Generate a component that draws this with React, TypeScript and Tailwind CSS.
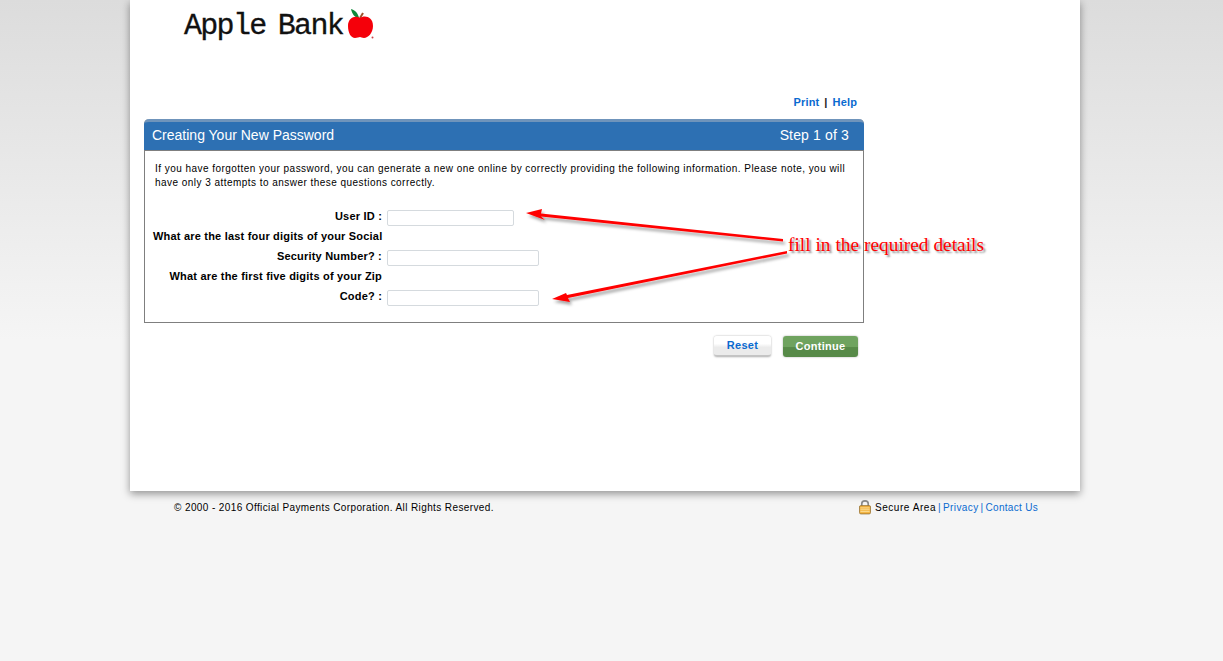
const arial = "font-['Liberation_Sans',Arial,sans-serif]";

const FormRow = ({ label, inputWidth }: { label: string; inputWidth?: string }) => (
  <div className="flex h-5 items-center">
    <div className="w-[230px] whitespace-nowrap pr-px text-right text-[11px] font-bold tracking-[0.2px] text-black">
      {label}
    </div>
    {inputWidth && (
      <input
        type="text"
        className={`ml-[4px] h-4 self-end ${inputWidth} rounded-[2px] border border-[#d5dade] bg-white`}
      />
    )}
  </div>
);

const AppleLogo = () => (
  <svg width="27" height="30" viewBox="0 0 27 30" className="mt-px">
    <path d="M4 0 C8 1 11 4 12 9 C8 9 5 5 4 0 Z" fill="#0c8a3a" />
    <path d="M13 9 L16 4" stroke="#a0522d" strokeWidth="2" />
    <path
      d="M13 9 C17 6 26 7 26 17 C26 24 21 29 17 29 C15 29 14 28 13 28 C12 28 10 29 8 29 C4 29 1 24 1 17 C1 8 9 6 13 9 Z"
      fill="#f5000a"
    />
    <circle cx="25.5" cy="28.5" r="1" fill="#d0404a" />
  </svg>
);

const Annotation = () => (
  <div className="absolute left-[500px] top-[195px] h-[120px] w-[500px]">
    <svg width="300" height="120" viewBox="0 0 300 120" className="absolute left-0 top-0">
      <defs>
        <filter id="arrowShadow" x="-10%" y="-20%" width="120%" height="150%">
          <feDropShadow dx="2" dy="3" stdDeviation="1.5" floodColor="#000" floodOpacity="0.35" />
        </filter>
      </defs>
      <g fill="#ff0000" filter="url(#arrowShadow)">
        <path d="M26 18 L42 14 L41 18.5 L283 44 L283 46.5 L41 21.5 L45 25 Z" />
        <path d="M52 104 L66 98 L67 100 L287 56 L287 58.5 L68 103 L70 107 Z" />
      </g>
    </svg>
    <div className="absolute left-[288px] top-[39px] whitespace-nowrap font-['Liberation_Serif',serif] text-[19.4px] leading-[22px] text-[#ff0000] [text-shadow:2px_2px_2px_rgba(0,0,0,0.45)]">
      fill in the required details
    </div>
  </div>
);

const LockIcon = () => (
  <svg width="12" height="16" viewBox="0 0 13 16" className="-mt-px">
    <path d="M3 7 V4.5 C3 0.3 10 0.3 10 4.5 V7" fill="none" stroke="#8a8a8a" strokeWidth="1.8" />
    <rect x="0.5" y="6.5" width="12" height="9" rx="1.5" fill="#f3b13c" stroke="#8f6b30" strokeWidth="0.8" />
    <path d="M1.5 9 H11.5 M1.5 11 H11.5 M1.5 13 H11.5" stroke="#fde6a8" strokeWidth="0.9" />
  </svg>
);

export default function App() {
  return (
    <div className={`${arial} relative h-[661px] w-full overflow-hidden bg-[linear-gradient(180deg,#dcdcdc_0px,#f5f5f5_340px)]`}>
      <main className="relative ml-[130px] h-[491px] w-[950px] bg-white shadow-[0_3px_8px_rgba(0,0,0,0.4)]">
        <div className="flex h-[94px] items-start pl-[54px] pt-[8px]">
          <div className="flex items-start">
            <span className="mt-[2px] w-[163px] whitespace-nowrap font-['Liberation_Mono',monospace] text-[30px] leading-[32px] tracking-[-1.7px] text-[#111] [word-spacing:-4px] [-webkit-text-stroke:0.3px_#111]">
              Apple Bank
            </span>
            <AppleLogo />
          </div>
        </div>

        <div className="flex h-[25px] w-[727px] items-start justify-end gap-[5px] pt-[1px] text-[11px] font-bold leading-[14px] tracking-[0.15px] text-[#0a6ad0]">
          <a>Print</a>
          <span className="text-[#222]">|</span>
          <a>Help</a>
        </div>

        <section className="ml-[14px] h-[204px] w-[720px] rounded-t-[5px] border border-t-0 border-[#7f7f7f]">
          <header className="-mx-px flex h-[32px] items-center justify-between rounded-t-[5px] border-t-[3px] border-b border-t-[#6f94bb] border-b-[#7f7f7f] bg-[#2d70b3] pb-[2px] pl-[8px] pr-[15px] text-[14px] text-white">
            <span>Creating Your New Password</span>
            <span className="tracking-[0.15px]">Step 1 of 3</span>
          </header>
          <p className="ml-[10px] mt-[11px] w-[700px] text-[10px] leading-[14px] tracking-[0.46px] text-black">
            If you have forgotten your password, you can generate a new one online by correctly providing the following information. Please note, you will have only 3 attempts to answer these questions correctly.
          </p>
          <div className="mt-[16px] flex flex-col pl-[8px]">
            <FormRow label="User ID :" inputWidth="w-[127px]" />
            <FormRow label="What are the last four digits of your Social" />
            <FormRow label="Security Number? :" inputWidth="w-[152px]" />
            <FormRow label="What are the first five digits of your Zip" />
            <FormRow label="Code? :" inputWidth="w-[152px]" />
          </div>
        </section>

        <div className="ml-[14px] mt-[13px] flex w-[714px] justify-end gap-[12px]">
          <button className="h-[21px] w-[57px] rounded-[3px] border-b-2 border-[#c4c4c4] bg-[linear-gradient(180deg,#ffffff_40%,#ebebeb_60%)] text-[11px] font-bold tracking-[0.3px] text-[#0a6ad0] shadow-[0_0_2px_rgba(0,0,0,0.35)]">
            Reset
          </button>
          <button className="h-[21px] w-[75px] rounded-[3px] bg-[linear-gradient(180deg,#6fa35f_50%,#578a48_55%)] text-[11px] font-bold tracking-[0.3px] text-white shadow-[0_0_2px_rgba(0,0,0,0.35)]">
            Continue
          </button>
        </div>
      </main>

      <footer className="ml-[174px] mt-[8px] flex h-[16px] w-[864px] items-center justify-between text-[10px] tracking-[0.39px] text-black">
        <span>© 2000 - 2016 Official Payments Corporation. All Rights Reserved.</span>
        <div className="flex items-center gap-[2px]">
          <LockIcon />
          <span className="ml-[2px] tracking-[0.55px]">Secure Area</span>
          <span className="text-[#0a6ad0]">|</span>
          <a className="text-[#0a6ad0]">Privacy</a>
          <span className="text-[#0a6ad0]">|</span>
          <a className="text-[#0a6ad0] tracking-[0.3px]">Contact Us</a>
        </div>
      </footer>

      <Annotation />
    </div>
  );
}
